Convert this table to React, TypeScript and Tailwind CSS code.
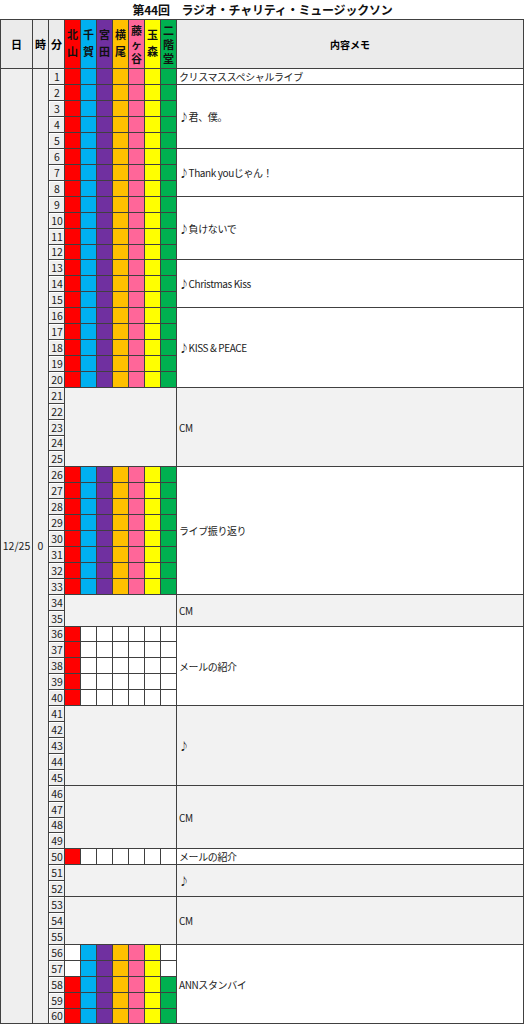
import React from "react";

const MEMBERS = [
  { name: ["北", "山"], bg: "bg-[#ff0000]" },
  { name: ["千", "賀"], bg: "bg-[#00b0f0]" },
  { name: ["宮", "田"], bg: "bg-[#7030a0]" },
  { name: ["横", "尾"], bg: "bg-[#ffc000]" },
  { name: ["藤", "ヶ", "谷"], bg: "bg-[#ff6699]" },
  { name: ["玉", "森"], bg: "bg-[#ffff00]" },
  { name: ["二", "階", "堂"], bg: "bg-[#00b050]" },
];

const ROW_SPAN: Record<number, string> = {
  1: "",
  2: "row-span-2",
  3: "row-span-3",
  4: "row-span-4",
  5: "row-span-5",
  8: "row-span-8",
};

// minute ranges: c = all colored, w = 北山 only, g = merged gray, a = ANN standby
type Kind = "c" | "w" | "g" | "a";
const BLOCKS: { from: number; to: number; kind: Kind }[] = [
  { from: 1, to: 20, kind: "c" },
  { from: 21, to: 25, kind: "g" },
  { from: 26, to: 33, kind: "c" },
  { from: 34, to: 35, kind: "g" },
  { from: 36, to: 40, kind: "w" },
  { from: 41, to: 45, kind: "g" },
  { from: 46, to: 49, kind: "g" },
  { from: 50, to: 50, kind: "w" },
  { from: 51, to: 52, kind: "g" },
  { from: 53, to: 55, kind: "g" },
  { from: 56, to: 60, kind: "a" },
];

const MEMOS: { from: number; span: number; text: string; gray?: boolean }[] = [
  { from: 1, span: 1, text: "クリスマススペシャルライブ" },
  { from: 2, span: 4, text: "♪君、僕。" },
  { from: 6, span: 3, text: "♪Thank youじゃん！" },
  { from: 9, span: 4, text: "♪負けないで" },
  { from: 13, span: 3, text: "♪Christmas Kiss" },
  { from: 16, span: 5, text: "♪KISS & PEACE" },
  { from: 21, span: 5, text: "CM", gray: true },
  { from: 26, span: 8, text: "ライブ振り返り" },
  { from: 34, span: 2, text: "CM", gray: true },
  { from: 36, span: 5, text: "メールの紹介" },
  { from: 41, span: 5, text: "♪", gray: true },
  { from: 46, span: 4, text: "CM", gray: true },
  { from: 50, span: 1, text: "メールの紹介" },
  { from: 51, span: 2, text: "♪", gray: true },
  { from: 53, span: 3, text: "CM", gray: true },
  { from: 56, span: 5, text: "ANNスタンバイ" },
];

const blockOf = (m: number) => BLOCKS.find((b) => m >= b.from && m <= b.to)!;

const App = () => {
  const cells: React.ReactNode[] = [];

  for (let m = 1; m <= 60; m++) {
    if (m === 1) {
      cells.push(
        <div key="day" className="row-span-60 bg-[#efefef] flex items-center justify-center text-[10.5px] text-[#222]">
          12/25
        </div>,
        <div key="hour" className="row-span-60 bg-[#efefef] flex items-center justify-center text-[10.5px] text-[#222]">
          0
        </div>
      );
    }

    cells.push(
      <div key={`n${m}`} className="bg-[#eeeeee] border-t border-l border-white flex items-center justify-center text-[10.5px] leading-none text-[#1a1a1a]">
        {m}
      </div>
    );

    const b = blockOf(m);
    if (b.kind === "g") {
      if (m === b.from) {
        cells.push(<div key={`g${m}`} className={`col-span-7 bg-[#f2f2f2] ${ROW_SPAN[b.to - b.from + 1]}`} />);
      }
    } else {
      MEMBERS.forEach((mem, i) => {
        let bg = mem.bg;
        if (b.kind === "w" && i > 0) bg = "bg-white";
        if (b.kind === "a" && m < 58 && (i === 0 || i === 6)) bg = "bg-white";
        cells.push(<div key={`c${m}-${i}`} className={bg} />);
      });
    }

    const memo = MEMOS.find((x) => x.from === m);
    if (memo) {
      cells.push(
        <div
          key={`m${m}`}
          className={`${ROW_SPAN[memo.span]} ${memo.gray ? "bg-[#f2f2f2]" : "bg-white"} flex items-center pl-[2px] text-[10px] tracking-[-0.4px] text-[#222] whitespace-nowrap`}
        >
          {memo.text}
        </div>
      );
    }
  }

  return (
    <div className="w-[525px] bg-white font-['Noto_Sans_CJK_JP',sans-serif]">
      {/* Title */}
      <div className="h-[19px] flex items-center justify-center text-[12px] font-bold tracking-[-0.2px] text-[#111]">
        第44回　ラジオ・チャリティ・ミュージックソン
      </div>

      {/* Sheet */}
      <div className="grid w-[524px] gap-px p-px bg-[#404040] grid-cols-[31px_15px_15px_repeat(7,15px)_346px] grid-rows-[48px_repeat(11,15px)_14px_repeat(11,15px)_14px_repeat(11,15px)_14px_repeat(11,15px)_14px_repeat(11,15px)_14px]">
        <div className="bg-[#ebebeb] flex items-center justify-center text-[11px] font-bold">日</div>
        <div className="bg-[#ebebeb] flex items-center justify-center text-[11px] font-bold">時</div>
        <div className="bg-[#ebebeb] flex items-center justify-center text-[11px] font-bold">分</div>
        {MEMBERS.map((mem) => (
          <div
            key={mem.name.join("")}
            className={`${mem.bg} flex flex-col items-center justify-center text-[11px] font-bold text-[#111] ${mem.name.length === 3 ? "leading-[14px]" : "leading-[17px] pb-[3px]"}`}
          >
            {mem.name.map((ch) => (
              <span key={ch}>{ch}</span>
            ))}
          </div>
        ))}
        <div className="bg-[#ebebeb] flex items-center justify-center text-[10px] font-bold">内容メモ</div>
        {cells}
      </div>
    </div>
  );
};

export default App;
